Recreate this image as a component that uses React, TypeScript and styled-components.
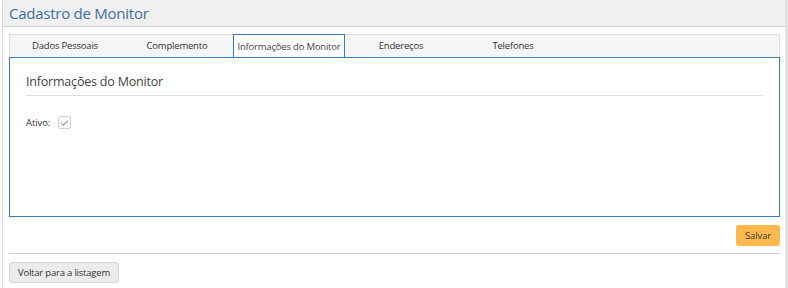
import React, { useState } from "react";
import styled, { createGlobalStyle } from "styled-components";

const Global = createGlobalStyle`
  html, body { margin: 0; padding: 0; background: #fff; }
  body { font-family: "Open Sans", "Noto Sans", sans-serif; color: #333; }
  * { box-sizing: border-box; }
`;

const Panel = styled.div`
  margin-left: 2px;
  width: 786px;
  height: 288px;
  border-left: 1px solid #dcdcdc;
  border-right: 3px solid #e2e2e2;
  display: flex;
  flex-direction: column;
`;

const Header = styled.div`
  height: 27px;
  background: #f0f0f0;
  border-bottom: 1px solid #d2d2d2;
  padding-left: 6px;
  padding-bottom: 1px;
  display: flex;
  align-items: center;
`;

const Title = styled.h1`
  margin: 0;
  font-size: 15px;
  font-weight: 400;
  color: #3b6fa8;
  letter-spacing: -0.25px;
`;

const Body = styled.div`
  padding: 7px 5px 0 6px;
  display: flex;
  flex-direction: column;
`;

const TabStrip = styled.div`
  height: 23px;
  background: #f5f5f5;
  border: 1px solid #dedede;
  border-bottom: none;
  display: flex;
`;

const Tab = styled.div<{ $active?: boolean }>`
  width: 112px;
  height: ${(p) => (p.$active ? "23px" : "22px")};
  margin-top: -1px;
  display: flex;
  align-items: center;
  justify-content: center;
  white-space: nowrap;
  font-size: 9.5px;
  letter-spacing: -0.2px;
  color: ${(p) => (p.$active ? "#444" : "#333")};
  background: ${(p) => (p.$active ? "#fff" : "transparent")};
  border: 1px solid ${(p) => (p.$active ? "#3b7dbf" : "transparent")};
  border-bottom: none;
  position: relative;
  z-index: 1;
  cursor: pointer;
  &:first-child { margin-left: -1px; }
`;

const Content = styled.div`
  height: 160px;
  border: 1px solid #3b7dbf;
  padding: 15px 16px 0 16px;
`;

const SectionTitle = styled.h2`
  margin: 0;
  font-size: 12.5px;
  letter-spacing: -0.2px;
  font-weight: 400;
  color: #444;
  padding-bottom: 5px;
  border-bottom: 1px solid #dcdcdc;
`;

const Field = styled.label`
  margin-top: 20px;
  display: flex;
  align-items: center;
  gap: 8px;
  font-size: 9.5px;
  letter-spacing: -0.1px;
  color: #333;
`;

const Check = styled.span`
  width: 13px;
  height: 13px;
  border: 1px solid #d2d2d2;
  border-radius: 2px;
  background: #fff;
  display: flex;
  align-items: center;
  justify-content: center;
`;

const ActionRow = styled.div`
  display: flex;
  justify-content: flex-end;
  margin-top: 8px;
`;

const SaveButton = styled.button`
  height: 21px;
  width: 44px;
  padding: 0;
  border: none;
  border-radius: 3px;
  background: #ffb94f;
  color: #3a3a3a;
  font-family: inherit;
  font-size: 9.5px;
  letter-spacing: -0.1px;
  cursor: pointer;
`;

const Divider = styled.hr`
  margin: 7px 0 0 0;
  border: none;
  border-top: 1px solid #cccccc;
`;

const BackRow = styled.div`
  margin-top: 8px;
  display: flex;
`;

const BackButton = styled.button`
  height: 21px;
  width: 110px;
  padding: 0;
  border: 1px solid #d6d6d6;
  border-radius: 3px;
  background: #ececec;
  color: #333;
  font-family: inherit;
  font-size: 9.5px;
  letter-spacing: -0.2px;
  cursor: pointer;
`;

const tabs = [
  "Dados Pessoais",
  "Complemento",
  "Informações do Monitor",
  "Endereços",
  "Telefones",
];

export default function App() {
  const [active, setActive] = useState(2);
  return (
    <>
      <Global />
      <Panel>
        <Header>
          <Title>Cadastro de Monitor</Title>
        </Header>
        <Body>
          <TabStrip>
            {tabs.map((t, i) => (
              <Tab key={t} $active={i === active} onClick={() => setActive(i)}>
                {t}
              </Tab>
            ))}
          </TabStrip>
          <Content>
            <SectionTitle>Informações do Monitor</SectionTitle>
            <Field>
              Ativo:
              <Check>
                <svg width="9" height="8" viewBox="0 0 9 8">
                  <path d="M1.2 4.2 L3.4 6.2 L7.8 1.6" fill="none" stroke="#7a9fd6" strokeWidth="1.1" />
                </svg>
              </Check>
            </Field>
          </Content>
          <ActionRow>
            <SaveButton>Salvar</SaveButton>
          </ActionRow>
          <Divider />
          <BackRow>
            <BackButton>Voltar para a listagem</BackButton>
          </BackRow>
        </Body>
      </Panel>
    </>
  );
}
